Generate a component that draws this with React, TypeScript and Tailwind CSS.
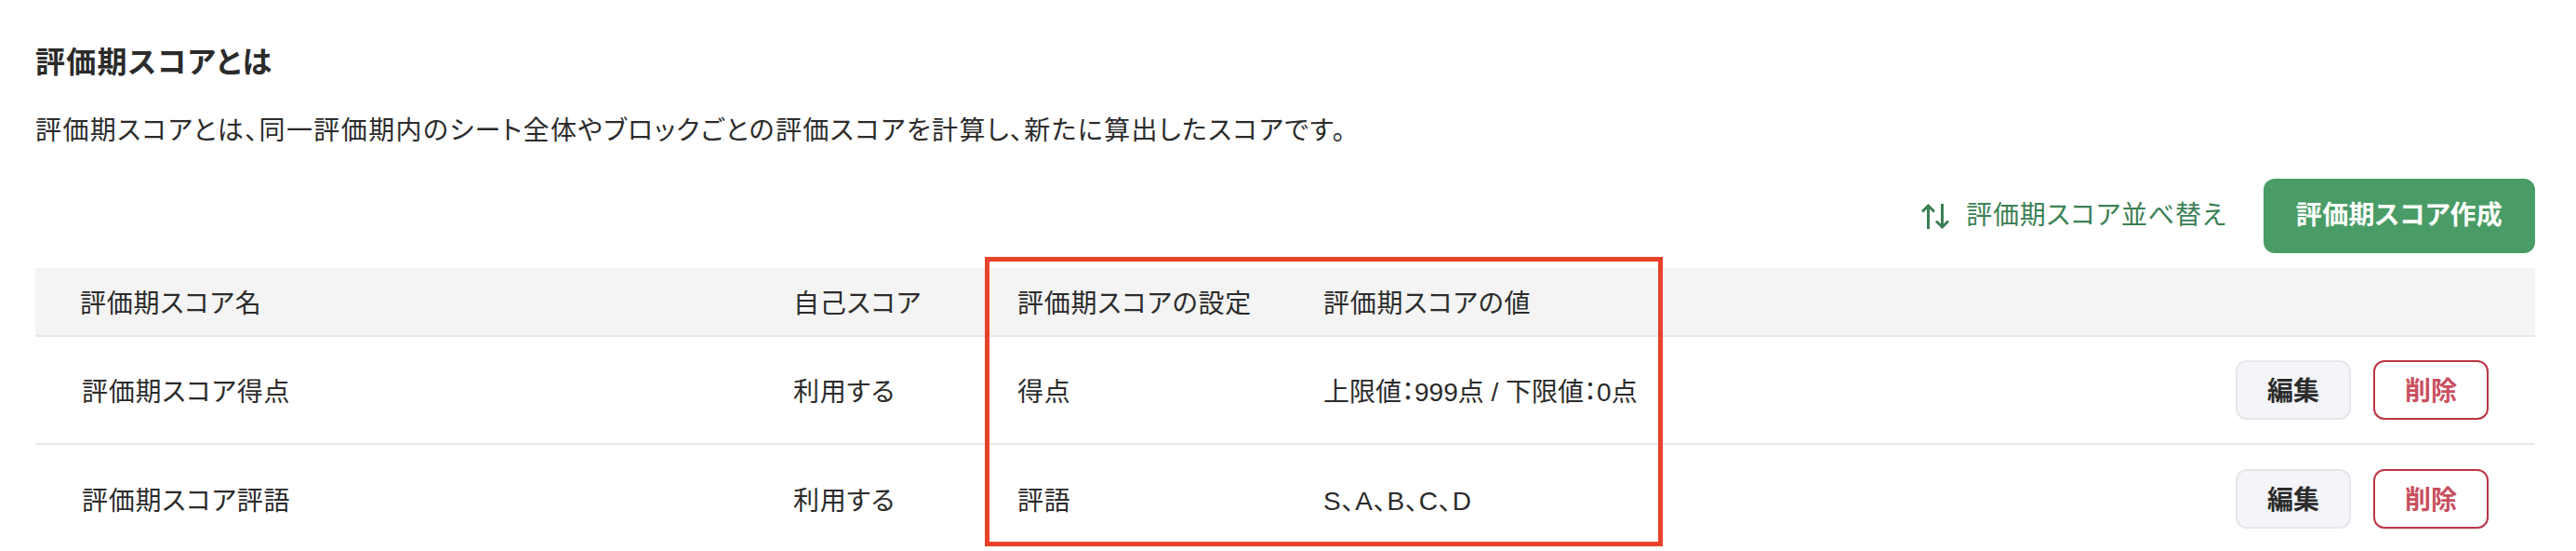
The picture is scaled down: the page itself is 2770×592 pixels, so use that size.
const font = "font-['Liberation_Sans','Noto_Sans_CJK_JP',sans-serif] [font-feature-settings:'palt']";

const ROWS = [
  { name: "評価期スコア得点", self: "利用する", setting: "得点", value: "上限値：999点 / 下限値：0点", tight: true },
  { name: "評価期スコア評語", self: "利用する", setting: "評語", value: "S、A、B、C、D", tight: false },
];

function SortIcon() {
  return (
    <svg viewBox="0 0 30 27" className="h-[27px] w-[30px]" fill="none" stroke="currentColor" strokeWidth="3">
      <path d="M7.5 27V2M1 8.5l6.5-6.5L14 8.5" />
      <path d="M22.5 0v25M16 18.5l6.5 6.5 6.5-6.5" />
    </svg>
  );
}

export default function App() {
  return (
    <div className={`${font} relative h-[592px] w-[2770px] overflow-hidden bg-white pt-[45px] pr-[44px] pl-[38px] text-[28px] tracking-[0.8px] text-[#2b2b2b]`}>
      <h2 className="text-[32px] leading-[44px] font-bold tracking-[1.3px]">評価期スコアとは</h2>
      <p className="mt-[31px] leading-[42px] tracking-[1.4px]">
        評価期スコアとは、同一評価期内のシート全体やブロックごとの評価スコアを計算し、新たに算出したスコアです。
      </p>

      <div className="mt-[30px] flex items-center justify-end">
        <a className="flex items-center gap-[18px] text-[#3b8055]">
          <SortIcon />
          評価期スコア並べ替え
        </a>
        <button className="ml-[40px] h-[80px] w-[292px] rounded-[12px] bg-[#4a9c66] font-bold tracking-[0.3px] text-white">
          評価期スコア作成
        </button>
      </div>

      <div className="mt-[16px]">
        <div className="grid h-[74px] grid-cols-[767px_241px_329px_1fr] items-center border-b-2 border-[#e6e6ec] bg-[#f4f4f4] pt-[5px] pl-[48px]">
          <div>評価期スコア名</div>
          <div>自己スコア</div>
          <div>評価期スコアの設定</div>
          <div>評価期スコアの値</div>
        </div>
        {ROWS.map((row) => (
          <div
            key={row.name}
            className="grid h-[116px] grid-cols-[767px_241px_329px_1fr] items-center border-b-2 border-[#e6e6ec] pl-[48px] last:border-b-0"
          >
            <div className="pt-[5px] pl-[2px]">{row.name}</div>
            <div className="pt-[5px]">{row.self}</div>
            <div className="pt-[5px]">{row.setting}</div>
            <div className="flex items-center justify-between pr-[50px]">
              <span className={row.tight ? "pt-[5px] tracking-normal" : "pt-[5px]"}>{row.value}</span>
              <div className="flex gap-[24px]">
                <button className="h-[64px] w-[124px] rounded-[12px] border-2 border-[#e6e7ec] bg-[#f4f5f9] pt-[3px] font-bold tracking-normal">
                  編集
                </button>
                <button className="h-[64px] w-[124px] rounded-[12px] border-2 border-[#bb3545] bg-white pt-[3px] font-bold tracking-normal text-[#c9505f]">
                  削除
                </button>
              </div>
            </div>
          </div>
        ))}
      </div>

      {/* annotation frame drawn over the table */}
      <div className="pointer-events-none absolute top-[276px] left-[1059px] h-[311px] w-[729px] border-[5px] border-[#e8432a]" />
    </div>
  );
}
